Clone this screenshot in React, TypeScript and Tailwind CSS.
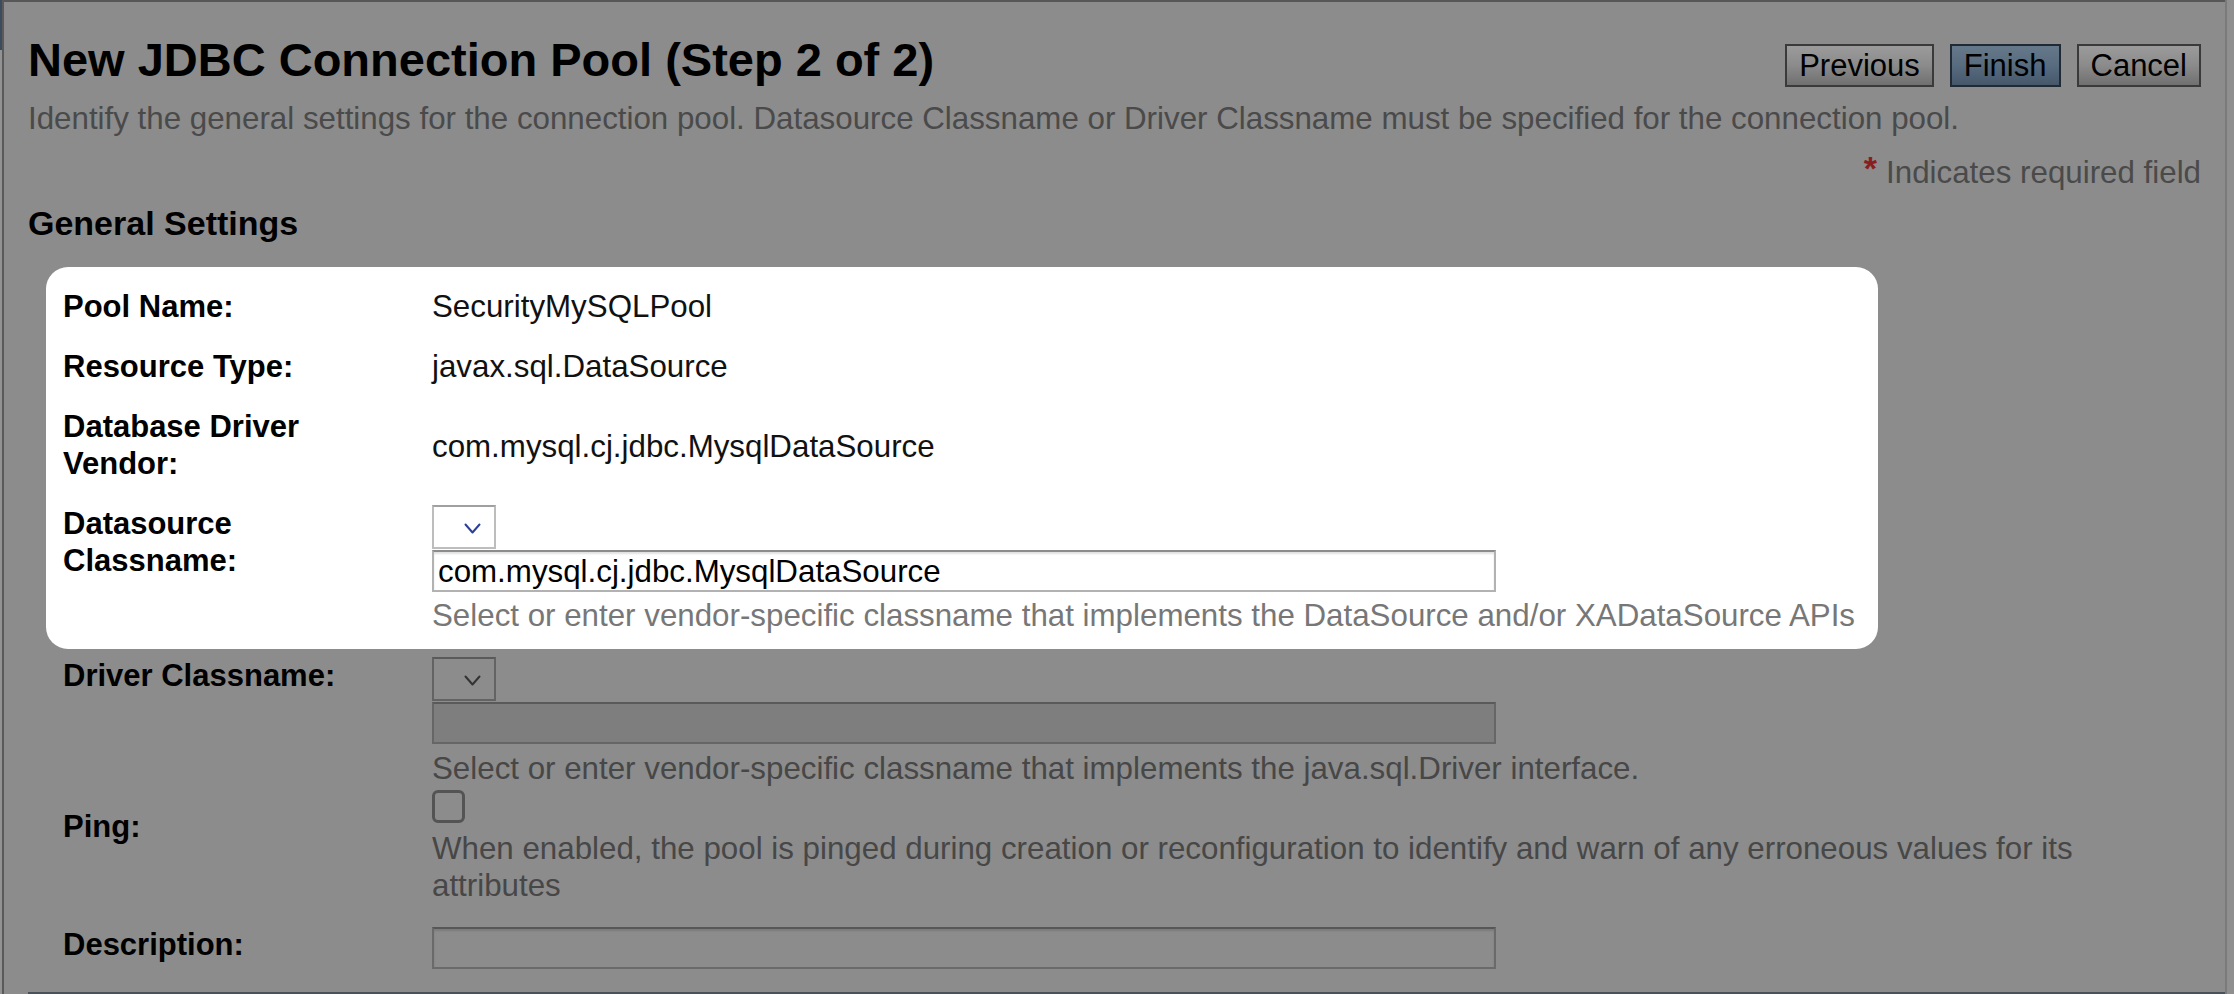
import React from "react";

function Chevron({ color }: { color: string }) {
  return (
    <svg width="17" height="11" viewBox="0 0 17 11" fill="none">
      <polyline points="1.5,1.5 8.5,9.5 15.5,1.5" stroke={color} strokeWidth="2" strokeLinecap="round" strokeLinejoin="round" />
    </svg>
  );
}

function Btn({ label, primary }: { label: string; primary?: boolean }) {
  return primary ? (
    <div className="border-2 border-[#1f2a35] bg-linear-to-b from-[#66798b] via-[#586c7f] to-[#46576a] text-black text-[31px] leading-[37px] px-[12px] py-[1px]">
      {label}
    </div>
  ) : (
    <div className="border-2 border-[#3a3a3a] bg-linear-to-b from-[#9b9b9b] via-[#8b8b8b] to-[#707070] text-black text-[31px] leading-[37px] px-[12px] py-[1px]">
      {label}
    </div>
  );
}

export default function App() {
  return (
    <div
      className="w-[2234px] h-[994px] bg-[#8c8c8c] flex overflow-hidden"
      style={{ fontFamily: '"Liberation Sans", Arial, Helvetica, sans-serif' }}
    >
      <div className="w-[2px] flex flex-col">
        <div className="h-[50px] bg-[#3d4c5c]" />
        <div className="flex-1 bg-[#939393]" />
      </div>
      <div className="w-[2px] bg-[#5a5a5a]" />
      <div className="flex-1 flex flex-col border-t-2 border-[#575757]">
        <div className="pl-[24px] pr-[24px] flex flex-col">
          <div className="flex justify-between items-start pt-[31px]">
            <h1 className="text-[47px] font-bold leading-[53px] text-black">
              New JDBC Connection Pool (Step 2 of 2)
            </h1>
            <div className="flex gap-[16px] mt-[11px]">
              <Btn label="Previous" />
              <Btn label="Finish" primary />
              <Btn label="Cancel" />
            </div>
          </div>
          <p className="mt-[13px] text-[31.3px] leading-[37px] text-[#4a4a4a]">
            Identify the general settings for the connection pool. Datasource Classname or Driver Classname must be specified for the connection pool.
          </p>
          <div className="mt-[17px] flex justify-end items-start text-[31.3px] leading-[37px] text-[#4a4a4a]">
            <span className="text-[34px] leading-[36px] font-bold text-[#8a1d1d] -mt-[4px] mr-[9px]">*</span>
            <span>Indicates required field</span>
          </div>
          <h2 className="mt-[12px] text-[34px] font-bold leading-[40px] text-black">General Settings</h2>

          <div className="mt-[24px] ml-[18px] flex flex-col text-[31.3px] leading-[37px]">
            <div className="w-[1832px] bg-white rounded-[22px] pl-[17px] pt-[21px] pb-[15px] flex flex-col gap-[23px]">
              <div className="grid grid-cols-[369px_1fr]">
                <div className="font-bold text-[31px] text-black">Pool Name:</div>
                <div className="text-[#111]">SecurityMySQLPool</div>
              </div>
              <div className="grid grid-cols-[369px_1fr]">
                <div className="font-bold text-[31px] text-black">Resource Type:</div>
                <div className="text-[#111]">javax.sql.DataSource</div>
              </div>
              <div className="grid grid-cols-[369px_1fr] items-center">
                <div className="font-bold text-[31px] text-black">
                  Database Driver
                  <br />
                  Vendor:
                </div>
                <div className="text-[#111] pt-[3px]">com.mysql.cj.jdbc.MysqlDataSource</div>
              </div>
              <div className="grid grid-cols-[369px_1fr] items-start">
                <div className="font-bold text-[31px] text-black">
                  Datasource
                  <br />
                  Classname:
                </div>
                <div className="flex flex-col items-start">
                  <div className="w-[64px] h-[44px] bg-white border-2 border-[#bdbdbd] border-t-[#a0a0a0] flex items-center justify-end pr-[13px] pt-[2px]">
                    <Chevron color="#2b3f96" />
                  </div>
                  <div className="mt-[1px] w-[1064px] h-[42px] bg-white border-2 border-[#b2b2b2] border-t-[#8c8c8c] shadow-[inset_0_2px_2px_rgba(0,0,0,0.12)] pl-[4px] flex items-center text-black">
                    com.mysql.cj.jdbc.MysqlDataSource
                  </div>
                  <div className="mt-[5px] text-[#777]">
                    Select or enter vendor-specific classname that implements the DataSource and/or XADataSource APIs
                  </div>
                </div>
              </div>
            </div>

            <div className="pl-[17px] flex flex-col">
              <div className="mt-[8px] grid grid-cols-[369px_1fr] items-start">
                <div className="font-bold text-[31px] text-black">Driver Classname:</div>
                <div className="flex flex-col items-start">
                  <div className="w-[64px] h-[44px] border-2 border-[#636363] border-t-[#5a5a5a] flex items-center justify-end pr-[13px] pt-[2px]">
                    <Chevron color="#333333" />
                  </div>
                  <div className="mt-[1px] w-[1064px] h-[42px] bg-[#7e7e7e] border-2 border-[#666666] border-t-[#5a5a5a]" />
                  <div className="mt-[6px] text-[#474747]">
                    Select or enter vendor-specific classname that implements the java.sql.Driver interface.
                  </div>
                </div>
              </div>
              <div className="mt-[3px] grid grid-cols-[369px_1fr] items-start">
                <div className="font-bold text-[31px] text-black mt-[18px]">Ping:</div>
                <div className="flex flex-col items-start">
                  <div className="w-[33px] h-[33px] border-[3px] border-[#545454] rounded-[6px]" />
                  <div className="mt-[7px] max-w-[1700px] text-[#474747]">
                    When enabled, the pool is pinged during creation or reconfiguration to identify and warn of any erroneous values for its attributes
                  </div>
                </div>
              </div>
              <div className="mt-[23px] grid grid-cols-[369px_1fr] items-start">
                <div className="font-bold text-[31px] text-black -mt-[1px]">Description:</div>
                <div className="w-[1064px] h-[42px] border-2 border-[#6a6a6a] border-t-[#575757] shadow-[inset_0_2px_2px_rgba(0,0,0,0.12)]" />
              </div>
            </div>
          </div>
        </div>
        <div className="mt-auto h-[2px] ml-[24px] bg-[#4b5159]" />
      </div>
      <div className="w-[2px] bg-[#7a7a7a]" />
      <div className="w-[7px] bg-[#8f8f8f]" />
    </div>
  );
}
